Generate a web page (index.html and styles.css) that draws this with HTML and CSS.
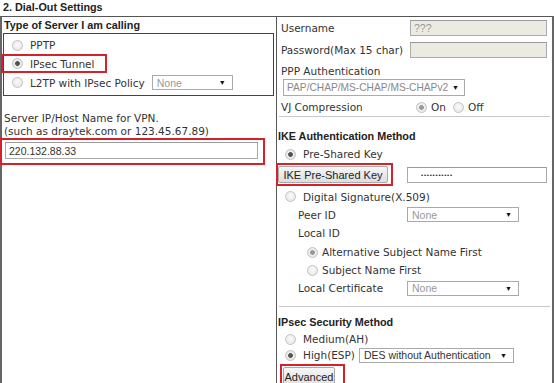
FILE: index.html
```html
<!DOCTYPE html>
<html lang="en">
<head>
  <meta charset="UTF-8">
  <title>Dial-Out Settings</title>
  <link rel="stylesheet" href="styles.css">
</head>
<body>
  <div class="title">2. Dial-Out Settings</div>

  <div class="panel">
    <div class="col-left">
      <div class="head">Type of Server I am calling</div>
      <div class="server-box">
        <div class="opt r-pptp"><span class="radio"></span>PPTP</div>
        <div class="opt r-tunnel"><span class="hl hl-tunnel"><span class="radio on"></span>IPsec Tunnel</span></div>
        <div class="opt r-l2tp"><span class="radio"></span>L2TP with IPsec Policy <span class="select sel-policy">None<i>&#9660;</i></span></div>
      </div>
      <p class="host-label">Server IP/Host Name for VPN.<br>(such as draytek.com or 123.45.67.89)</p>
      <div class="hl hl-host"><input class="text host" type="text" value="220.132.88.33"></div>
    </div>

    <div class="col-right">
      <div class="row r-user"><span class="lbl">Username</span><input class="text off" type="text" value="???"></div>
      <div class="row r-pass"><span class="lbl">Password(Max 15 char)</span><input class="text off" type="text" value=""></div>
      <div class="row r-ppplabel">PPP Authentication</div>
      <div class="row r-pppsel"><span class="select sel-ppp">PAP/CHAP/MS-CHAP/MS-CHAPv2<i>&#9660;</i></span></div>
      <div class="row r-vj"><span class="lbl lbl-vj">VJ Compression</span><span class="radio on dim"></span>On<span class="radio gap"></span>Off</div>
      <div class="sep"></div>

      <div class="row head-r">IKE Authentication Method</div>
      <div class="row r-psk"><span class="radio on"></span>Pre-Shared Key</div>
      <div class="row r-pskbtn">
        <span class="hl hl-ike"><button class="btn btn-ike">IKE Pre-Shared Key</button></span>
        <input class="text psk" type="password" value="xxxxxxxxxxx">
      </div>
      <div class="row r-sig"><span class="radio"></span>Digital Signature(X.509)</div>
      <div class="row r-peer"><span class="lbl lbl-sub">Peer ID</span><span class="select sel-small">None<i>&#9660;</i></span></div>
      <div class="row r-local"><span class="lbl lbl-sub">Local ID</span></div>
      <div class="row r-alt"><span class="radio on dim"></span>Alternative Subject Name First</div>
      <div class="row r-subj"><span class="radio"></span>Subject Name First</div>
      <div class="row r-cert"><span class="lbl lbl-sub">Local Certificate</span><span class="select sel-small">None<i>&#9660;</i></span></div>
      <div class="sep sep-2"></div>

      <div class="row head-r head-ipsec">IPsec Security Method</div>
      <div class="row r-med"><span class="radio"></span>Medium(AH)</div>
      <div class="row r-high"><span class="radio on"></span>High(ESP) <span class="select sel-esp">DES without Authentication<i>&#9660;</i></span></div>
      <div class="row r-adv"><span class="hl hl-adv"><button class="btn btn-adv">Advanced</button></span></div>
    </div>
  </div>
</body>
</html>
```

FILE: styles.css
```css
body {
  margin: 0;
  background: #fff;
  color: #333;
  font-family: "DejaVu Sans", Verdana, sans-serif;
  font-size: 10.5px;
  overflow: hidden;
}
.title {
  height: 16px;
  line-height: 14px;
  padding-left: 3px;
  font: bold 10.8px/14px "Liberation Sans", Arial, sans-serif;
  color: #222;
}
.panel {
  display: grid;
  grid-template-columns: 274px 1fr;
  height: 420px;
  border-top: 1px solid #555;
  border-left: 2px solid #666;
  border-right: 2px solid #666;
}
.col-right {
  border-left: 1px solid #555;
  padding-left: 4px;
  padding-right: 2px;
}
.head {
  height: 16px;
  line-height: 16px;
  padding-left: 2px;
  font: bold 10.8px/16px "Liberation Sans", Arial, sans-serif;
  color: #222;
}
.server-box {
  margin: 0 2px 0 1px;
  border: 1px solid #444;
  padding: 2px 0 3px;
}
.opt {
  display: flex;
  align-items: center;
  padding-left: 8px;
}
.r-pptp { height: 18px; }
.r-tunnel { height: 19px; }
.r-l2tp { height: 19px; }

.radio {
  display: inline-block;
  width: 9px;
  height: 9px;
  margin-right: 7px;
  border: 1px solid #c2c2c2;
  border-radius: 50%;
  background: radial-gradient(circle at 50% 40%, #fafafa 0, #e4e4e4 100%);
  flex: none;
}
.radio.on {
  background: radial-gradient(circle, #555 0, #555 2px, #eee 2.8px, #dcdcdc 100%);
}
.radio.on.dim {
  background: radial-gradient(circle, #999 0, #999 2px, #f0f0f0 2.8px, #e2e2e2 100%);
}

.hl {
  display: inline-flex;
  align-items: center;
  border: 2px solid #d3222c;
  box-sizing: border-box;
}
.hl-tunnel {
  width: 106px;
  height: 19px;
  margin-left: -11px;
  padding-left: 9px;
}
.hl-host {
  display: flex;
  width: 265px;
  height: 27px;
  margin-left: -2px;
  padding: 2px 0 0 3px;
  align-items: flex-start;
}
.hl-ike {
  height: 23px;
  margin-left: -5px;
  padding: 1px 3px 1px 0;
}
.hl-adv {
  height: 22px;
  margin-left: -1px;
  padding: 1px 8px 0 1px;
  align-items: flex-start;
  border-bottom: none;
}

.select {
  display: inline-flex;
  align-items: center;
  justify-content: space-between;
  box-sizing: border-box;
  height: 15px;
  padding: 0 6px 0 4px;
  border: 1px solid #aaa;
  background: #fff;
  color: #999;
  white-space: nowrap;
  font: 10.5px "Liberation Sans", Arial, sans-serif;
}
.select i {
  font-style: normal;
  font-size: 7px;
  color: #111;
}
.sel-policy {
  width: 81px;
  margin-left: 7px;
}
.sel-ppp {
  width: 182px;
  height: 17px;
  margin-left: 2px;
  padding: 0 5px 0 3px;
  color: #888;
  font-size: 10.2px;
}
.sel-small {
  width: 112px;
}
.sel-esp {
  width: 155px;
  height: 15px;
  margin-left: 4px;
  color: #333;
  font-size: 10.5px;
}

.host-label {
  margin: 16px 0 0;
  padding-left: 2px;
  line-height: 13px;
}
input.text {
  box-sizing: border-box;
  height: 16px;
  padding: 0 3px;
  border: 1px solid #aaa;
  border-top-color: #999;
  font: 10.5px "Liberation Sans", Arial, sans-serif;
  color: #333;
  background: #fff;
}
input.host {
  width: 253px;
  height: 17px;
}
input.off {
  width: 137px;
  background: #ebebe4;
  color: #999;
}
input.psk {
  width: 140px;
  margin-left: 14px;
  padding-left: 13px;
  font-size: 6px;
  letter-spacing: 0.8px;
  color: #222;
}

.row {
  display: flex;
  align-items: center;
  white-space: nowrap;
}
.lbl {
  width: 129px;
  flex: none;
}
.lbl-sub {
  width: 109px;
  padding-left: 17px;
}
.r-user { height: 22px; }
.r-pass { height: 21px; }
.r-ppplabel {
  height: 19px;
  align-items: flex-start;
  padding-top: 5px;
  line-height: 13px;
  box-sizing: border-box;
}
.r-pppsel { height: 19px; align-items: flex-start; }
.r-vj { height: 18px; }
.lbl-vj { width: 135px; }
.r-vj .radio { margin-right: 4px; }
.r-vj .radio.gap { margin-left: 7px; }

.sep {
  height: 1px;
  margin-left: -2px;
  background: #c8c8c8;
}
.sep-2 { margin-top: 9px; }

.head-r {
  height: 18px;
  margin-top: 10px;
  margin-left: -3px;
  font: bold 10.8px "Liberation Sans", Arial, sans-serif;
  color: #222;
}
.head-ipsec { margin-top: 6px; }
.r-psk, .r-sig, .r-med, .r-high { padding-left: 4px; }
.r-psk { height: 18px; }
.r-pskbtn { height: 23px; }
.r-sig { height: 21px; }
.r-peer { height: 15px; }
.r-local { height: 21px; }
.r-alt, .r-subj { height: 18px; padding-left: 26px; }
.r-alt .radio, .r-subj .radio { margin-right: 4px; }
.r-cert { height: 18px; }
.r-med { height: 16px; }
.r-high { height: 16px; }
.r-adv { margin-top: 1px; }

.btn {
  box-sizing: border-box;
  height: 17px;
  padding: 0;
  border: 1px solid #aaa;
  border-radius: 2px;
  background: linear-gradient(#f6f6f6, #dedede);
  color: #222;
  font: 11px "Liberation Sans", Arial, sans-serif;
}
.btn-ike { width: 110px; }
.btn-adv { width: 52px; height: 20px; }
```
